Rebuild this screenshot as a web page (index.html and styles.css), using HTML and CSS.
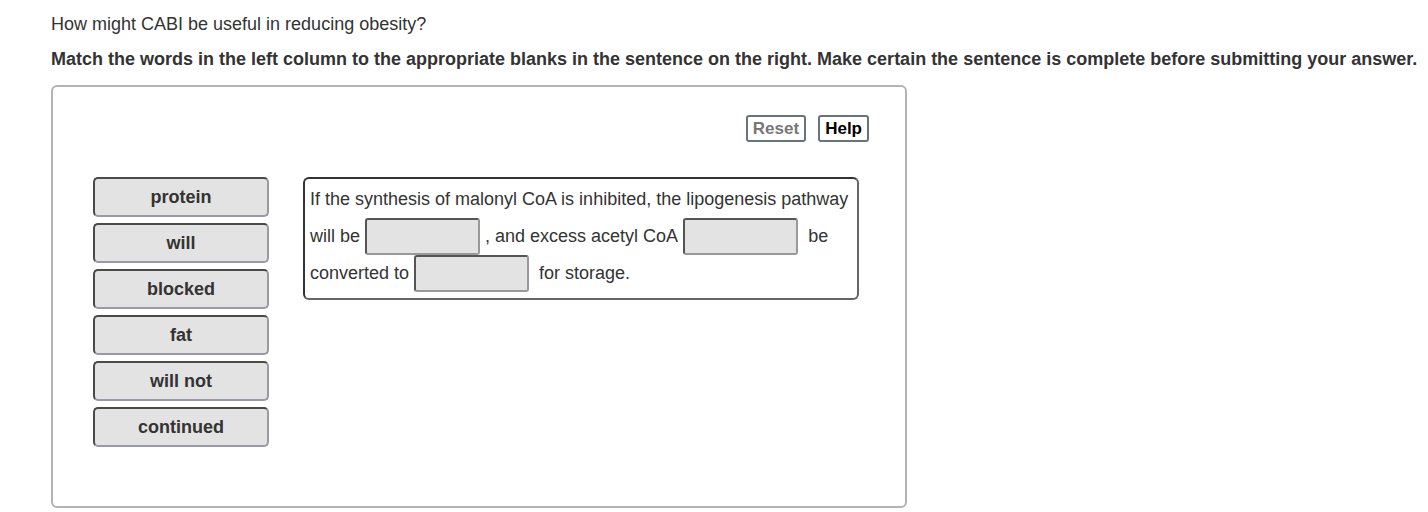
FILE: index.html
```html
<!DOCTYPE html>
<html lang="en">
<head>
  <meta charset="UTF-8">
  <title>Labeling Question</title>
  <link rel="stylesheet" href="styles.css">
</head>
<body>
  <p class="question">How might CABI be useful in reducing obesity?</p>
  <p class="instructions">Match the words in the left column to the appropriate blanks in the sentence on the right. Make certain the sentence is complete before submitting your answer.</p>

  <div class="activity">
    <div class="toolbar">
      <button class="tool-btn reset">Reset</button>
      <button class="tool-btn">Help</button>
    </div>

    <div class="workspace">
      <div class="word-bank">
        <div class="word">protein</div>
        <div class="word">will</div>
        <div class="word">blocked</div>
        <div class="word">fat</div>
        <div class="word">will not</div>
        <div class="word">continued</div>
      </div>

      <div class="sentence">
        <div class="line">
          <span>If the synthesis of malonyl CoA is inhibited, the lipogenesis pathway</span>
        </div>
        <div class="line">
          <span>will be</span>
          <span class="blank tight"></span>
          <span>, and excess acetyl CoA</span>
          <span class="blank"></span>
          <span>be</span>
        </div>
        <div class="line">
          <span>converted to</span>
          <span class="blank"></span>
          <span>for storage.</span>
        </div>
      </div>
    </div>
  </div>
</body>
</html>
```

FILE: styles.css
```css
body {
  font-family: "Liberation Sans", Arial, Helvetica, sans-serif;
  font-size: 18px;
  color: #333;
  margin: 0;
  padding: 14px 51px;
}
.question {
  margin: 0 0 15px 0;
  line-height: 20px;
}
.instructions {
  margin: 0 0 16px 0;
  font-weight: bold;
  line-height: 20px;
  white-space: nowrap;
}
.activity {
  width: 852px;
  height: 419px;
  border: 2px solid #b3b3b3;
  border-radius: 6px;
}
.toolbar {
  display: flex;
  justify-content: flex-end;
  gap: 12px;
  padding: 28px 36px 0 0;
}
.tool-btn {
  font-family: inherit;
  font-size: 17px;
  font-weight: bold;
  color: #000;
  background: #fff;
  border: 2px solid #66757d;
  border-radius: 3px;
  height: 27px;
  padding: 0 5px;
  line-height: 20px;
}
.tool-btn.reset {
  color: #777;
}
.workspace {
  display: flex;
  gap: 34px;
  padding: 35px 0 0 40px;
}
.word-bank {
  display: flex;
  flex-direction: column;
  gap: 6px;
}
.word {
  width: 172px;
  height: 36px;
  line-height: 36px;
  text-align: center;
  font-weight: bold;
  color: #333;
  background: #e3e3e3;
  border: 2px solid;
  border-color: #4a4a4a #9a9aa6 #9a9aa6 #4a4a4a;
  border-radius: 5px;
}
.sentence {
  width: 542px;
  height: 117px;
  padding: 2px 5px 0 5px;
  color: #333;
  border: 2px solid;
  border-color: #333 #666 #666 #333;
  border-radius: 6px;
}
.line {
  display: flex;
  align-items: center;
  height: 37px;
  white-space: nowrap;
}
.blank {
  width: 111px;
  height: 33px;
  margin: 0 10px 0 5px;
  background: #e3e3e3;
  border: 2px solid;
  border-color: #555 #999 #999 #555;
  border-radius: 3px;
}
.blank.tight {
  margin-right: 5px;
}
```
